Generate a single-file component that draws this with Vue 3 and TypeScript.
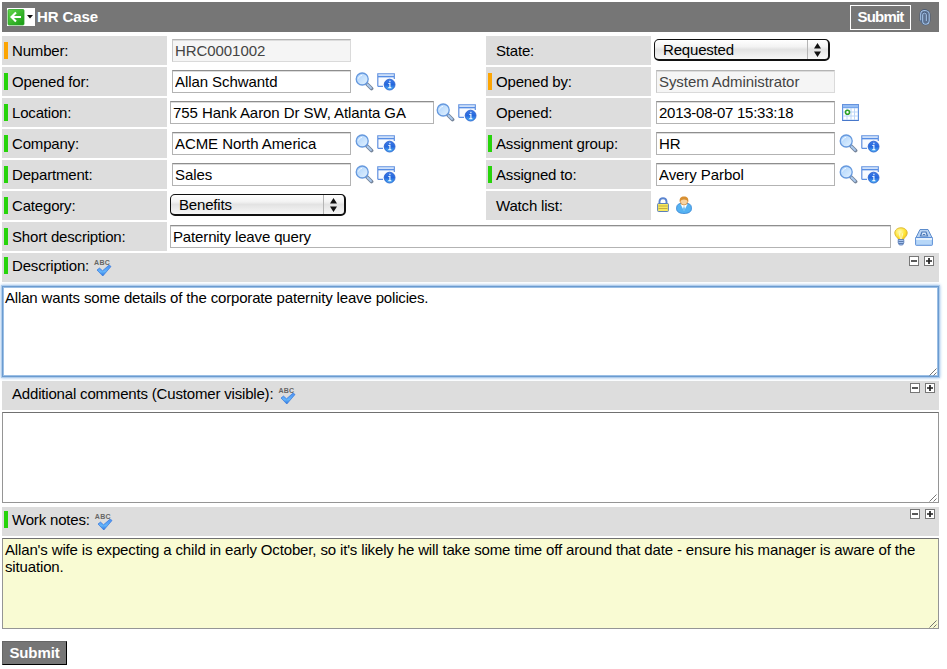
<script setup lang="ts">
import { ref } from 'vue'

type Marker = 'filled' | 'readonly' | 'none'
type Kind = 'text' | 'select' | 'watch'

interface Field {
  id: string
  label: string
  marker: Marker
  kind: Kind
  value: string
  readonly?: boolean
  wide?: boolean
  icons?: 'reference' | 'calendar'
}

interface Note {
  id: string
  label: string
  marker: Marker
  value: string
  look: string
}

const fields = ref<Field[]>([
  { id: 'number', label: 'Number:', marker: 'readonly', kind: 'text', value: 'HRC0001002', readonly: true },
  { id: 'state', label: 'State:', marker: 'none', kind: 'select', value: 'Requested' },
  { id: 'opened_for', label: 'Opened for:', marker: 'filled', kind: 'text', value: 'Allan Schwantd', icons: 'reference' },
  { id: 'opened_by', label: 'Opened by:', marker: 'readonly', kind: 'text', value: 'System Administrator', readonly: true },
  { id: 'location', label: 'Location:', marker: 'filled', kind: 'text', value: '755 Hank Aaron Dr SW, Atlanta GA', wide: true, icons: 'reference' },
  { id: 'opened', label: 'Opened:', marker: 'none', kind: 'text', value: '2013-08-07 15:33:18', icons: 'calendar' },
  { id: 'company', label: 'Company:', marker: 'filled', kind: 'text', value: 'ACME North America', icons: 'reference' },
  { id: 'group', label: 'Assignment group:', marker: 'filled', kind: 'text', value: 'HR', icons: 'reference' },
  { id: 'department', label: 'Department:', marker: 'filled', kind: 'text', value: 'Sales', icons: 'reference' },
  { id: 'assigned', label: 'Assigned to:', marker: 'filled', kind: 'text', value: 'Avery Parbol', icons: 'reference' },
  { id: 'category', label: 'Category:', marker: 'filled', kind: 'select', value: 'Benefits' },
  { id: 'watch', label: 'Watch list:', marker: 'none', kind: 'watch', value: '' },
])

const shortDescription = ref('Paternity leave query')

const notes = ref<Note[]>([
  { id: 'description', label: 'Description:', marker: 'filled', look: 'active', value: 'Allan wants some details of the corporate paternity leave policies.' },
  { id: 'comments', label: 'Additional comments (Customer visible):', marker: 'none', look: 'plain', value: '' },
  { id: 'work_notes', label: 'Work notes:', marker: 'filled', look: 'journal', value: "Allan's wife is expecting a child in early October, so it's likely he will take some time off around that date - ensure his manager is aware of the situation." },
])
</script>

<template>
  <form class="page" @submit.prevent>
    <svg class="defs" width="0" height="0" aria-hidden="true">
      <defs>
        <linearGradient id="lens" x1="0" y1="0" x2="1" y2="1">
          <stop offset="0" stop-color="#a9d0fb" /><stop offset="1" stop-color="#e4f3ff" />
        </linearGradient>
        <linearGradient id="ball" x1="0" y1="0" x2="0" y2="1">
          <stop offset="0" stop-color="#3c7ae8" /><stop offset=".5" stop-color="#2467dd" /><stop offset="1" stop-color="#4fb6f7" />
        </linearGradient>
        <linearGradient id="leaf" x1="0" y1="0" x2="1" y2="1">
          <stop offset="0" stop-color="#64d74b" /><stop offset="1" stop-color="#159a12" />
        </linearGradient>
        <linearGradient id="tick" x1="0" y1="0" x2="0" y2="1">
          <stop offset="0" stop-color="#4b8df0" /><stop offset=".6" stop-color="#62b4fb" /><stop offset="1" stop-color="#2c74dd" />
        </linearGradient>
        <radialGradient id="glow" cx=".4" cy=".35" r=".7">
          <stop offset="0" stop-color="#fffbb8" /><stop offset=".6" stop-color="#ffe436" /><stop offset="1" stop-color="#f2c313" />
        </radialGradient>
      </defs>
    </svg>

    <header class="bar">
      <button type="button" class="back" aria-label="Back">
        <svg width="28" height="18" viewBox="0 0 28 18">
          <rect width="28" height="18" fill="#fff" />
          <rect x="1" y="1.5" width="16" height="15.5" rx="1" fill="url(#leaf)" stroke="#2ba526" stroke-width=".8" />
          <path d="M14 9H4.500M9 4.500 4.500 9 9 13.500" fill="none" stroke="#fff" stroke-width="2.100" />
          <path d="M20 7h6l-3 3.400z" fill="#111" />
        </svg>
      </button>
      <h1>HR Case</h1>
      <button class="top-submit">Submit</button>
      <svg class="clip" width="12" height="17" viewBox="0 0 12 17">
        <path d="M1.200 4.500 3.500 1.200h4.800l2.500 3v7.600l-2.500 3.700H3.800l-2.600-3z" fill="#5d718f" />
        <path d="M1.500 12V5C1.500 2.500 3.300 1.200 5.500 1.200S10.500 2.500 10.500 5v6.500c0 2.500-2 4-4 4S3.500 14 3.500 12V6c0-1.500 1-2.200 2-2.200S7.500 4.500 7.500 6v6" fill="none" stroke="#3c5273" stroke-width="1.700" />
        <path d="M1.700 11.500V5C1.700 2.700 3.300 1.500 5.500 1.500S10.200 2.700 10.200 5v6.500c0 2.300-1.800 3.700-3.700 3.700S3.700 14 3.700 12V6c0-1.300.8-2 1.800-2s1.800.7 1.800 2v6" fill="none" stroke="#a9c8ec" stroke-width="1.100" />
      </svg>
    </header>

    <section class="grid">
      <div v-for="f in fields" :key="f.id" class="field">
        <label :for="f.id" class="label"><i class="marker" :class="f.marker"></i>{{ f.label }}</label>
        <div class="value" :class="[f.kind, { wide: f.wide }]">
          <input v-if="f.kind === 'text'" :id="f.id" v-model="f.value" class="input" :readonly="f.readonly" :class="{ locked: f.readonly, date: f.icons === 'calendar' }" />
          <div v-else-if="f.kind === 'select'" class="picker">
            <select :id="f.id" v-model="f.value"><option>{{ f.value }}</option></select>
            <svg class="arrows" width="21" height="20" viewBox="0 0 21 20">
              <path d="M.5 0v20" stroke="#b5b5b5" />
              <path d="M7 8.500h7L10.500 3zM7 11.500h7L10.500 17z" fill="#111" />
            </svg>
          </div>
          <template v-else>
            <svg class="lock" width="12" height="16" viewBox="0 0 12 16">
              <path d="M2.500 8V4.500C2.500 2.400 4 1.200 6 1.200s3.500 1.200 3.500 3.300V8" fill="none" stroke="#5a84cf" stroke-width="1.900" />
              <rect x=".6" y="6.500" width="10.800" height="8" rx=".8" fill="#f7e960" stroke="#5b7fbb" />
              <path d="M1.500 9h9M1.500 11.500h9" stroke="#c7ae3c" />
            </svg>
            <svg class="person" width="16" height="18" viewBox="0 0 16 18">
              <path d="M.6 13.500C.2 10 1.500 8 4 7.500h8c2.700.5 3.800 2.500 3.400 6-.4 2.500-3.300 4-7.400 4S1 16 .6 13.500z" fill="#55b2f2" stroke="#3282d2" stroke-width=".8" />
              <path d="M4.500 8h7L8 15z" fill="#fff" /><path d="m8 9.500 1 3.500-1 3-1-3z" fill="#61b5ee" />
              <circle cx="8" cy="5.300" r="3.700" fill="#f8d4a3" stroke="#c98334" stroke-width=".7" />
              <path d="M3.700 5.800C3.200 2.500 5 .6 8 .6s4.800 1.900 4.300 5.200L10.500 4 8 3.400 5.500 4z" fill="#d89033" />
            </svg>
          </template>
          <template v-if="f.icons === 'reference'">
            <svg class="search" width="19" height="19" viewBox="0 0 19 19">
              <path d="m12 12 4.500 4.500" stroke="#75849a" stroke-width="3.800" stroke-linecap="round" />
              <path d="m12.500 12.500 3.500 3.500" stroke="#a9c9ef" stroke-width="1.800" stroke-linecap="round" />
              <circle cx="7.200" cy="7" r="6" fill="url(#lens)" stroke="#6699de" stroke-width="1.300" />
              <path d="M3.500 6.500C4 4.500 5.500 3.500 7 3.400" stroke="#fff" fill="none" opacity=".8" />
            </svg>
            <svg class="info" width="19" height="19" viewBox="0 0 19 19">
              <path d="M1 2.500h16.200v12H1z" fill="#f8fbff" />
              <path d="M.8 14.500V1.800h16.500V7M1 14.400h5" fill="none" stroke="#6090df" stroke-width="1.200" />
              <path d="M1.400 2.900h15.400" stroke="#c4dcfa" /><path d="M1 4.600h16" stroke="#578ee4" stroke-width="1.500" />
              <circle cx="12.600" cy="12.600" r="5.400" fill="url(#ball)" stroke="#2a61cd" stroke-width=".9" />
              <path d="M12.900 8.700v1.500M11.300 11.500h1.600v4M11.300 15.700h3" stroke="#e6f3ff" stroke-width="1.200" fill="none" />
            </svg>
          </template>
          <svg v-else-if="f.icons === 'calendar'" class="calendar" width="17" height="17" viewBox="0 0 17 17">
            <rect x=".5" y=".5" width="16" height="16" fill="#bcd6f8" stroke="#6593de" />
            <path d="M1 1h15v3H1z" fill="#75a6ec" /><path d="M1 2h15" stroke="#b9d5fb" />
            <path d="M1.500 4.500h3v3h-3zM5.500 4.500h3v3h-3zM9.500 4.500h2.500v3H9.500zM13 4.500h2.500v3H13zM1.500 8.500h3v3h-3zM5.500 8.500h3v3h-3zM9.500 8.500h2.500v3H9.500zM13 8.500h2.500v3H13zM1.500 12.500h3v3h-3zM5.500 12.500h3v3h-3zM9.500 12.500h2.500v3H9.500zM13 12.500h2.500v3H13z" fill="#fff" />
            <path d="M.5 16.500h16" stroke="#4777ca" />
            <circle cx="5.500" cy="8.300" r="2" fill="#fff" stroke="#2ea027" stroke-width="1.600" />
          </svg>
        </div>
      </div>
    </section>

    <div class="field long">
      <label for="short" class="label"><i class="marker filled"></i>Short description:</label>
      <div class="value">
        <input id="short" v-model="shortDescription" class="input" />
        <svg class="bulb" width="14" height="19" viewBox="0 0 14 19">
          <path d="M4.500 12.500C4 10.500.8 9.500.8 6 .8 2.800 3.600.8 7 .8s6.200 2 6.200 5.200c0 3.500-3.200 4.500-3.700 6.500z" fill="url(#glow)" stroke="#d8b437" stroke-width=".9" />
          <path d="M5.500 6.500 6.500 12M8.500 6.500 7.500 12" stroke="#fff" stroke-width=".7" />
          <path d="M4.200 12.500h5.600v3.500L8.600 18H5.400l-1.200-2z" fill="#a8c4ee" stroke="#5276b4" stroke-width=".8" />
          <path d="M4.500 14.500h5M5 16.500h4" stroke="#47699e" stroke-width=".8" />
        </svg>
        <svg class="drawer" width="18" height="18" viewBox="0 0 18 18">
          <path d="M5 1.500h8L17.200 10H.8z" fill="#b9d3f3" stroke="#5c8ccc" />
          <path d="M5.500 8 7 4h4l1.500 4z" fill="#dceafb" stroke="#4776b8" stroke-width="1.200" />
          <path d="M7.800 6.500h2.400" stroke="#4776b8" />
          <rect x=".6" y="9.500" width="16.800" height="7.800" rx=".6" fill="#b7d7f8" stroke="#5b8ed6" />
          <path d="M1 11h16" stroke="#f5faff" stroke-width="1.500" />
        </svg>
      </div>
    </div>

    <section v-for="n in notes" :key="n.id" class="note" :class="n.look">
      <div class="note-head">
        <label :for="n.id"><i class="marker" :class="n.marker"></i>{{ n.label }}</label>
        <span class="spell">
          <span class="abc">ABC</span>
          <svg width="18" height="12" viewBox="0 0 18 12">
            <path d="M3 5 5.500 3.100 8.500 5.800 15.200 0 17 1.500 8.800 11z" fill="url(#tick)" stroke="#3476db" stroke-width=".7" />
          </svg>
        </span>
        <span class="sizers">
          <svg width="10" height="10" viewBox="0 0 10 10"><rect x=".5" y=".5" width="9" height="9" fill="#fff" stroke="#777" /><path d="M2 5h6" stroke="#222" stroke-width="1.500" /></svg>
          <svg width="10" height="10" viewBox="0 0 10 10"><rect x=".5" y=".5" width="9" height="9" fill="#fff" stroke="#777" /><path d="M2 5h6M5 2v6" stroke="#222" stroke-width="1.700" /></svg>
        </span>
      </div>
      <div class="area">
        <textarea :id="n.id" v-model="n.value" spellcheck="false"></textarea>
        <svg class="grip" width="8" height="8" viewBox="0 0 8 8"><path d="M.5 7.500l7-7M4.500 7.500l3-3" stroke="#666" stroke-width=".9" /></svg>
      </div>
    </section>

    <button class="bottom-submit">Submit</button>
  </form>
</template>

<style>
body { margin: 0; background: #fff; }
</style>

<style scoped>
.page {
  box-sizing: border-box;
  width: 941px;
  padding: 2px;
  display: flex;
  flex-direction: column;
  font: 15px/17px "Liberation Sans", Arial, sans-serif;
  letter-spacing: -.18px;
  color: #000;
}
.page *, .page *::before { box-sizing: border-box; }
.defs { position: absolute; }
svg { display: block; flex: none; }
button, input, select, textarea { font: inherit; letter-spacing: inherit; color: inherit; margin: 0; border-radius: 0; }

.bar {
  height: 30px;
  margin-bottom: 4px;
  padding: 0 8px 0 5px;
  display: flex;
  align-items: center;
  background: #767676;
  color: #fff;
}
.back { padding: 0; border: 0; background: none; }
h1 { margin: 0 auto 0 2px; padding-bottom: 2px; font-size: 15px; line-height: 17px; font-weight: bold; letter-spacing: -.12px; }
.top-submit {
  width: 61px;
  height: 25px;
  padding: 0 0 2px;
  border: 1px solid #fff;
  background: #767676;
  font-weight: bold;
  letter-spacing: -.8px;
}
.clip { margin-left: 8px; }

.grid { display: grid; grid-template-columns: 484px 453px; row-gap: 2px; }
.field { height: 29px; display: flex; }
.long { margin-top: 2px; }
.label {
  width: 165px;
  flex: none;
  padding-left: 2px;
  display: flex;
  align-items: center;
  background: #ddd;
}
.marker { width: 4px; height: 17px; margin-right: 4px; flex: none; }
.filled { background: #27d40b; }
.readonly { background: #fca504; }

.value { flex: 1; display: flex; padding: 3px 0 0 5px; }
.value.wide, .value.select, .long .value { padding-left: 3px; }
.input {
  width: 179px;
  height: 23px;
  padding: 0 0 0 2px;
  border: 1px solid #b3b3b3;
  border-top: 1px solid #8e8e8e;
  box-shadow: inset 0 1px #dcdcdc;
  background: #fff;
  outline: none;
  letter-spacing: -.07px;
}
.date { letter-spacing: -.26px; }
.wide .input { width: 264px; }
.long .input { width: 721px; letter-spacing: -.14px; }
.locked { background: #f5f5f5; color: #444; border-color: #b4b4b4 #dadada #dadada #c9c9c9; }
.search { margin: 2px 0 0 4px; }
.wide .search { margin-left: 2px; }
.info { margin: 2px 0 0 3px; }
.calendar { margin: 3px 0 0 7px; }
.picker {
  position: relative;
  width: 176px;
  height: 22px;
  border: 1px solid #111;
  border-bottom-width: 2px;
  border-right-width: 2px;
  border-radius: 5px;
  background: linear-gradient(#fff, #f3f3f3 35%, #e3e3e3 50%, #f7f7f7);
  overflow: hidden;
}
.picker select {
  display: block;
  width: 100%;
  height: 18px;
  padding: 0 0 0 8px;
  border: 0;
  background: none;
  appearance: none;
  outline: none;
}
.arrows { position: absolute; right: 0; top: 0; pointer-events: none; }
.lock { margin: 3px 0 0 1px; }
.person { margin: 2px 0 0 7px; }
.bulb { margin: 2px 0 0 3px; }
.drawer { margin: 3px 0 0 7px; }

.note { margin-top: 2px; }
.note-head {
  height: 29px;
  padding: 4px 4px 0 2px;
  display: flex;
  align-items: flex-start;
  background: #ddd;
}
.note-head label { display: flex; align-items: center; }
.spell { width: 19px; margin: 3px 0 0 5px; display: block; }
.abc {
  display: block;
  height: 5px;
  font: bold 7px/6px "Liberation Sans", Arial, sans-serif;
  letter-spacing: .3px;
  color: #666;
}
.sizers { margin: -2px 0 0 auto; display: flex; gap: 5px; }
.active .sizers { margin-right: 1px; margin-top: -1px; }
.area { position: relative; height: 91px; margin-top: 2px; }
.active .area { margin-top: 4px; margin-bottom: 4px; }
.plain .area { margin-bottom: 4px; }
.plain, .journal { margin-top: 0; }
textarea {
  display: block;
  width: 937px;
  height: 91px;
  padding: 2px;
  border: 1px solid #959595;
  border-top-color: #707070;
  background: #fff;
  resize: none;
  outline: none;
  overflow: hidden;
}
.active textarea { letter-spacing: -.165px; border-color: #6b9bd0; box-shadow: 0 0 0 1px #b0cdec, 0 0 3px 1px #9cc1e9, inset 0 0 0 1px #9bbfe5; }
.journal textarea { background: #f9fbd3; letter-spacing: -.147px; }
.grip { position: absolute; right: 2px; bottom: 1px; }
.bottom-submit {
  width: 65px;
  height: 24px;
  margin-top: 12px;
  padding: 0 0 1px;
  border: 1px solid;
  border-color: #666 #000 #000 #666;
  background: #767676;
  color: #fff;
  font-weight: bold;
  letter-spacing: -.1px;
}
</style>
